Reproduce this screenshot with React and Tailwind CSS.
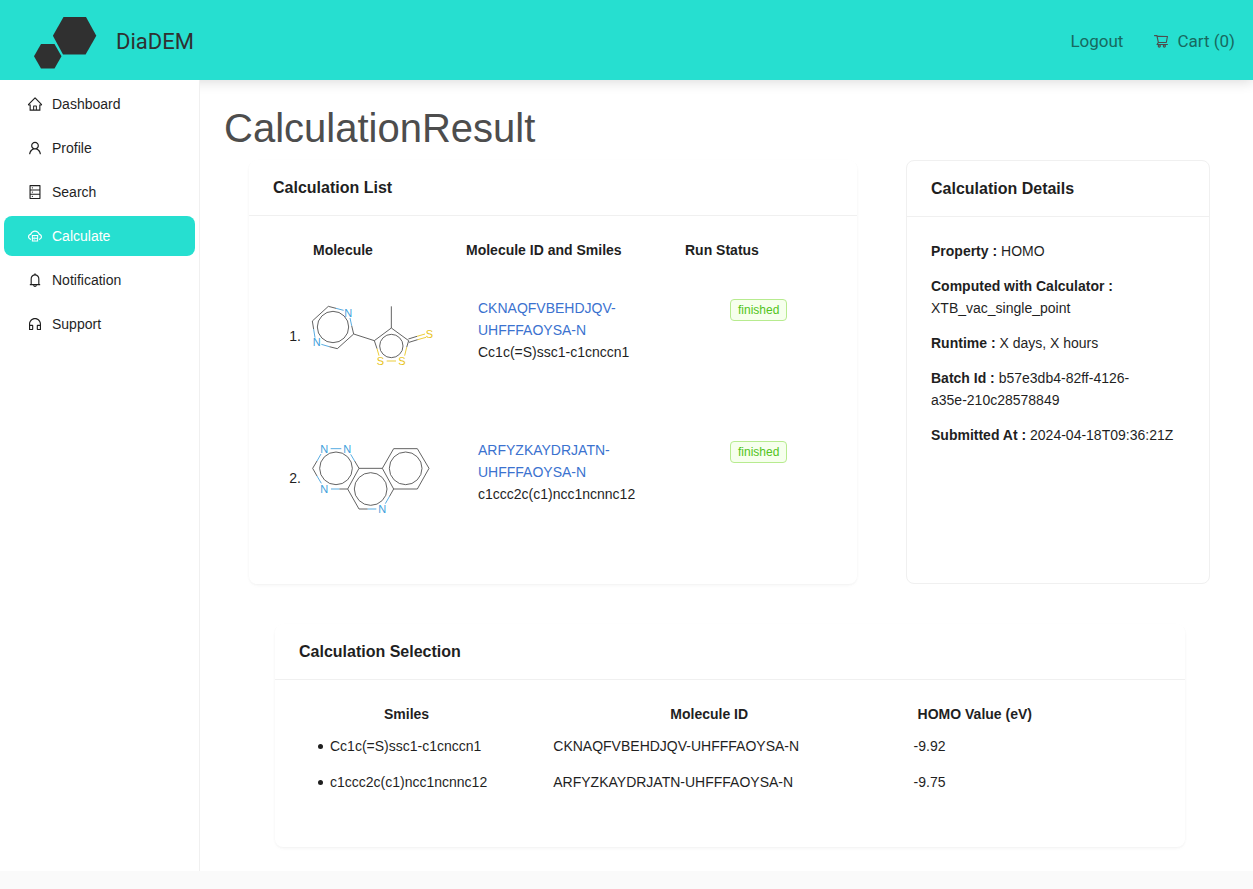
import React from "react";
import {
  AiOutlineHome,
  AiOutlineUser,
  AiOutlineDatabase,
  AiOutlineCloudServer,
  AiOutlineBell,
  AiOutlineCustomerService,
  AiOutlineShoppingCart,
} from "react-icons/ai";

const navItems = [
  { label: "Dashboard", Icon: AiOutlineHome },
  { label: "Profile", Icon: AiOutlineUser },
  { label: "Search", Icon: AiOutlineDatabase },
  { label: "Calculate", Icon: AiOutlineCloudServer, active: true },
  { label: "Notification", Icon: AiOutlineBell },
  { label: "Support", Icon: AiOutlineCustomerService },
];

function Logo() {
  return (
    <svg viewBox="0 0 64 54" className="h-[54px] w-16" fill="#303030" aria-hidden="true">
      <path d="M30.5 2h22.5l10.3 18.8L52.6 39.5H30L19.9 20.8z" />
      <path d="M8 29h13.5l7 12.2-7 12.3H8L1 41.2z" />
    </svg>
  );
}

function Header() {
  return (
    <header className="flex h-20 items-center justify-between bg-[#26dfd0] pl-[33px] pr-[18px] font-[Roboto,sans-serif] shadow-[0_2px_12px_rgba(0,0,0,0.14)]">
      <a href="#home" className="flex items-center gap-[19px] pt-1">
        <Logo />
        <span className="text-[22px] leading-7 text-[#303030]">DiaDEM</span>
      </a>
      <nav className="flex items-center gap-[30px] pt-[2px] text-[17px] leading-6 text-[#17695f]">
        <a href="#logout">Logout</a>
        <a href="#cart" className="flex items-center gap-2">
          <AiOutlineShoppingCart className="size-4 text-[#4d4d4d]" />
          Cart (0)
        </a>
      </nav>
    </header>
  );
}

function Sidebar() {
  return (
    <aside className="relative z-10 w-[200px] shrink-0 border-r border-[#f0f0f0] bg-white px-1 pt-1">
      <nav className="flex flex-col gap-1">
        {navItems.map(({ label, Icon, active }) => (
          <a
            key={label}
            href={"#" + label.toLowerCase()}
            className={
              active
                ? "flex h-10 items-center gap-[9px] rounded-lg bg-[#26dfd0] px-[23px] text-white"
                : "flex h-10 items-center gap-[9px] rounded-lg px-[23px]"
            }
          >
            <Icon className="size-4" />
            {label}
          </a>
        ))}
      </nav>
    </aside>
  );
}

const BLUE = "#3f9fdc";
const YELLOW = "#e8c41c";

function Atom({ x, y, name }) {
  return (
    <text
      x={x}
      y={y + 12}
      textAnchor="middle"
      fontSize="33"
      fontFamily="Liberation Sans, sans-serif"
      fill={name === "S" ? YELLOW : BLUE}
    >
      {name}
    </text>
  );
}

function MoleculeOne() {
  return (
    <svg viewBox="81 -12 390 300" className="block h-[100px] w-[130px]" fill="none" strokeWidth="2.6" role="img" aria-label="Cc1c(=S)ssc1-c1cnccn1">
      <g stroke="#4a4a4a">
        <path d="M101 118L97 93L145 49L168 55M215 107L221 132L172 176L148 170" />
        <path d="M221 132L283 152L334 114V49M334 114L386 152L380 172M283 152L291 176" />
        <path d="M385 147L411 139M387 157L413 149" />
        <circle cx="159" cy="111" r="47" />
        <circle cx="334" cy="168" r="35" />
      </g>
      <path stroke={BLUE} d="M101 118L105 143M168 55L191 61M215 107L210 84M148 170L124 163" />
      <path stroke={YELLOW} d="M380 172L374 197M291 176L297 197M320 213H348M411 139L435 132M413 149L438 142" />
      <Atom x={205} y={69} name="N" />
      <Atom x={110} y={157} name="N" />
      <Atom x={301} y={213} name="S" />
      <Atom x={366} y={213} name="S" />
      <Atom x={448} y={133} name="S" />
    </svg>
  );
}

function MoleculeTwo() {
  return (
    <svg viewBox="81 -6 390 300" className="block h-[100px] w-[130px]" fill="none" strokeWidth="2.6" role="img" aria-label="c1ccc2c(c1)ncc1ncnnc12">
      <g stroke="#4a4a4a">
        <path d="M111 93L98 115L111 138M224 93L237 115L203 177H178M237 115H307L341 177L328 200" />
        <path d="M203 177L237 237H263M307 115L341 56H412L447 115L412 177H341" />
        <circle cx="168" cy="115" r="49" />
        <circle cx="272" cy="177" r="49" />
        <circle cx="377" cy="115" r="49" />
      </g>
      <path stroke={BLUE} d="M111 93L123 72M111 138L124 160M152 56H184M224 93L212 73M178 177H153M328 200L316 221M263 237H289" />
      <Atom x={133} y={56} name="N" />
      <Atom x={202} y={56} name="N" />
      <Atom x={133} y={177} name="N" />
      <Atom x={307} y={237} name="N" />
    </svg>
  );
}

const molecules = [
  { id: "CKNAQFVBEHDJQV-UHFFFAOYSA-N", smiles: "Cc1c(=S)ssc1-c1cnccn1", homo: "-9.92", Drawing: MoleculeOne },
  { id: "ARFYZKAYDRJATN-UHFFFAOYSA-N", smiles: "c1ccc2c(c1)ncc1ncnnc12", homo: "-9.75", Drawing: MoleculeTwo },
];

function Card({ title, bordered, className, children }) {
  return (
    <section
      className={
        (bordered
          ? "rounded-lg border border-[#f0f0f0] bg-white "
          : "rounded-lg bg-white shadow-[0_1px_2px_0_rgba(0,0,0,0.03),0_1px_6px_-1px_rgba(0,0,0,0.02),0_2px_4px_0_rgba(0,0,0,0.02)] ") +
        (className || "")
      }
    >
      <h2 className="flex h-14 items-center border-b border-[#f0f0f0] px-6 text-base font-semibold">{title}</h2>
      {children}
    </section>
  );
}

function CalculationList() {
  return (
    <Card title="Calculation List">
      <div className="px-6 pt-[23px] pb-[39px]">
        <table className="w-full table-fixed text-left">
          <colgroup>
            <col className="w-[34px]" />
            <col className="w-[159px]" />
            <col className="w-[219px]" />
            <col />
          </colgroup>
          <thead>
            <tr>
              <th />
              <th className="pl-[6px] font-semibold">Molecule</th>
              <th className="font-semibold">Molecule ID and Smiles</th>
              <th className="font-semibold">Run Status</th>
            </tr>
          </thead>
          <tbody>
            {molecules.map(({ id, smiles, Drawing }, i) => (
              <tr key={id}>
                <td className="pt-[25px] pr-[6px] pb-[17px] text-right align-middle">{i + 1}.</td>
                <td className="pt-[25px] pb-[17px]">
                  <Drawing />
                </td>
                <td className="pt-9 pl-3 align-top">
                  <a href={"#" + id} className="block text-[#3b72cf]">{id}</a>
                  {smiles}
                </td>
                <td className="pt-[38px] pl-[45px] align-top">
                  <span className="block w-fit rounded border border-[#b7eb8f] bg-[#f6ffed] px-[7px] text-xs leading-5 text-[#52c41a]">
                    finished
                  </span>
                </td>
              </tr>
            ))}
          </tbody>
        </table>
      </div>
    </Card>
  );
}

const details = [
  ["Property", "HOMO"],
  ["Computed with Calculator", "XTB_vac_single_point"],
  ["Runtime", "X days, X hours"],
  ["Batch Id", "b57e3db4-82ff-4126-a35e-210c28578849"],
  ["Submitted At", "2024-04-18T09:36:21Z"],
];

function CalculationDetails() {
  return (
    <Card title="Calculation Details" bordered>
      <div className="flex flex-col gap-[13px] px-6 pt-[23px] pb-6">
        {details.map(([name, value]) => (
          <p key={name} className={name === "Batch Id" ? "max-w-[220px]" : undefined}>
            <strong className="font-semibold">{name} :</strong> {value}
          </p>
        ))}
      </div>
    </Card>
  );
}

function CalculationSelection() {
  return (
    <Card title="Calculation Selection" className="mt-10 mr-[25px] ml-[26px]">
      <div className="px-6 pt-[23px] pb-[47px]">
        <table className="w-full table-fixed text-left">
          <colgroup>
            <col className="w-[29.5%]" />
            <col className="w-[41.8%]" />
            <col />
          </colgroup>
          <thead>
            <tr>
              <th className="pb-[3px] pl-[85px] font-semibold">Smiles</th>
              <th className="pb-[3px] pl-[117px] font-semibold">Molecule ID</th>
              <th className="pb-[3px] pl-1 font-semibold">HOMO Value (eV)</th>
            </tr>
          </thead>
          <tbody>
            {molecules.map(({ id, smiles, homo }) => (
              <tr key={id} className="h-9">
                <td className="pl-[19px]">
                  <span className="flex items-center gap-[7px]">
                    <span className="size-[5px] rounded-full bg-[#1f1f1f]" />
                    {smiles}
                  </span>
                </td>
                <td>{id}</td>
                <td>{homo}</td>
              </tr>
            ))}
          </tbody>
        </table>
      </div>
    </Card>
  );
}

export default function App() {
  return (
    <div className="min-h-screen bg-[#fafafa] font-['Liberation_Sans',Arial,sans-serif] text-sm leading-[22px] text-[#1f1f1f]">
      <div className="bg-white">
        <Header />
        <div className="flex">
          <Sidebar />
          <main className="min-w-0 flex-1 pt-6 pr-[43px] pb-6 pl-6">
            <h1 className="mb-2 text-[40px] leading-[48px] text-[#4d4d4d]">CalculationResult</h1>
            <div className="pl-[25px]">
              <div className="grid grid-cols-[2fr_1fr] gap-[49px]">
                <CalculationList />
                <CalculationDetails />
              </div>
              <CalculationSelection />
            </div>
          </main>
        </div>
      </div>
    </div>
  );
}
